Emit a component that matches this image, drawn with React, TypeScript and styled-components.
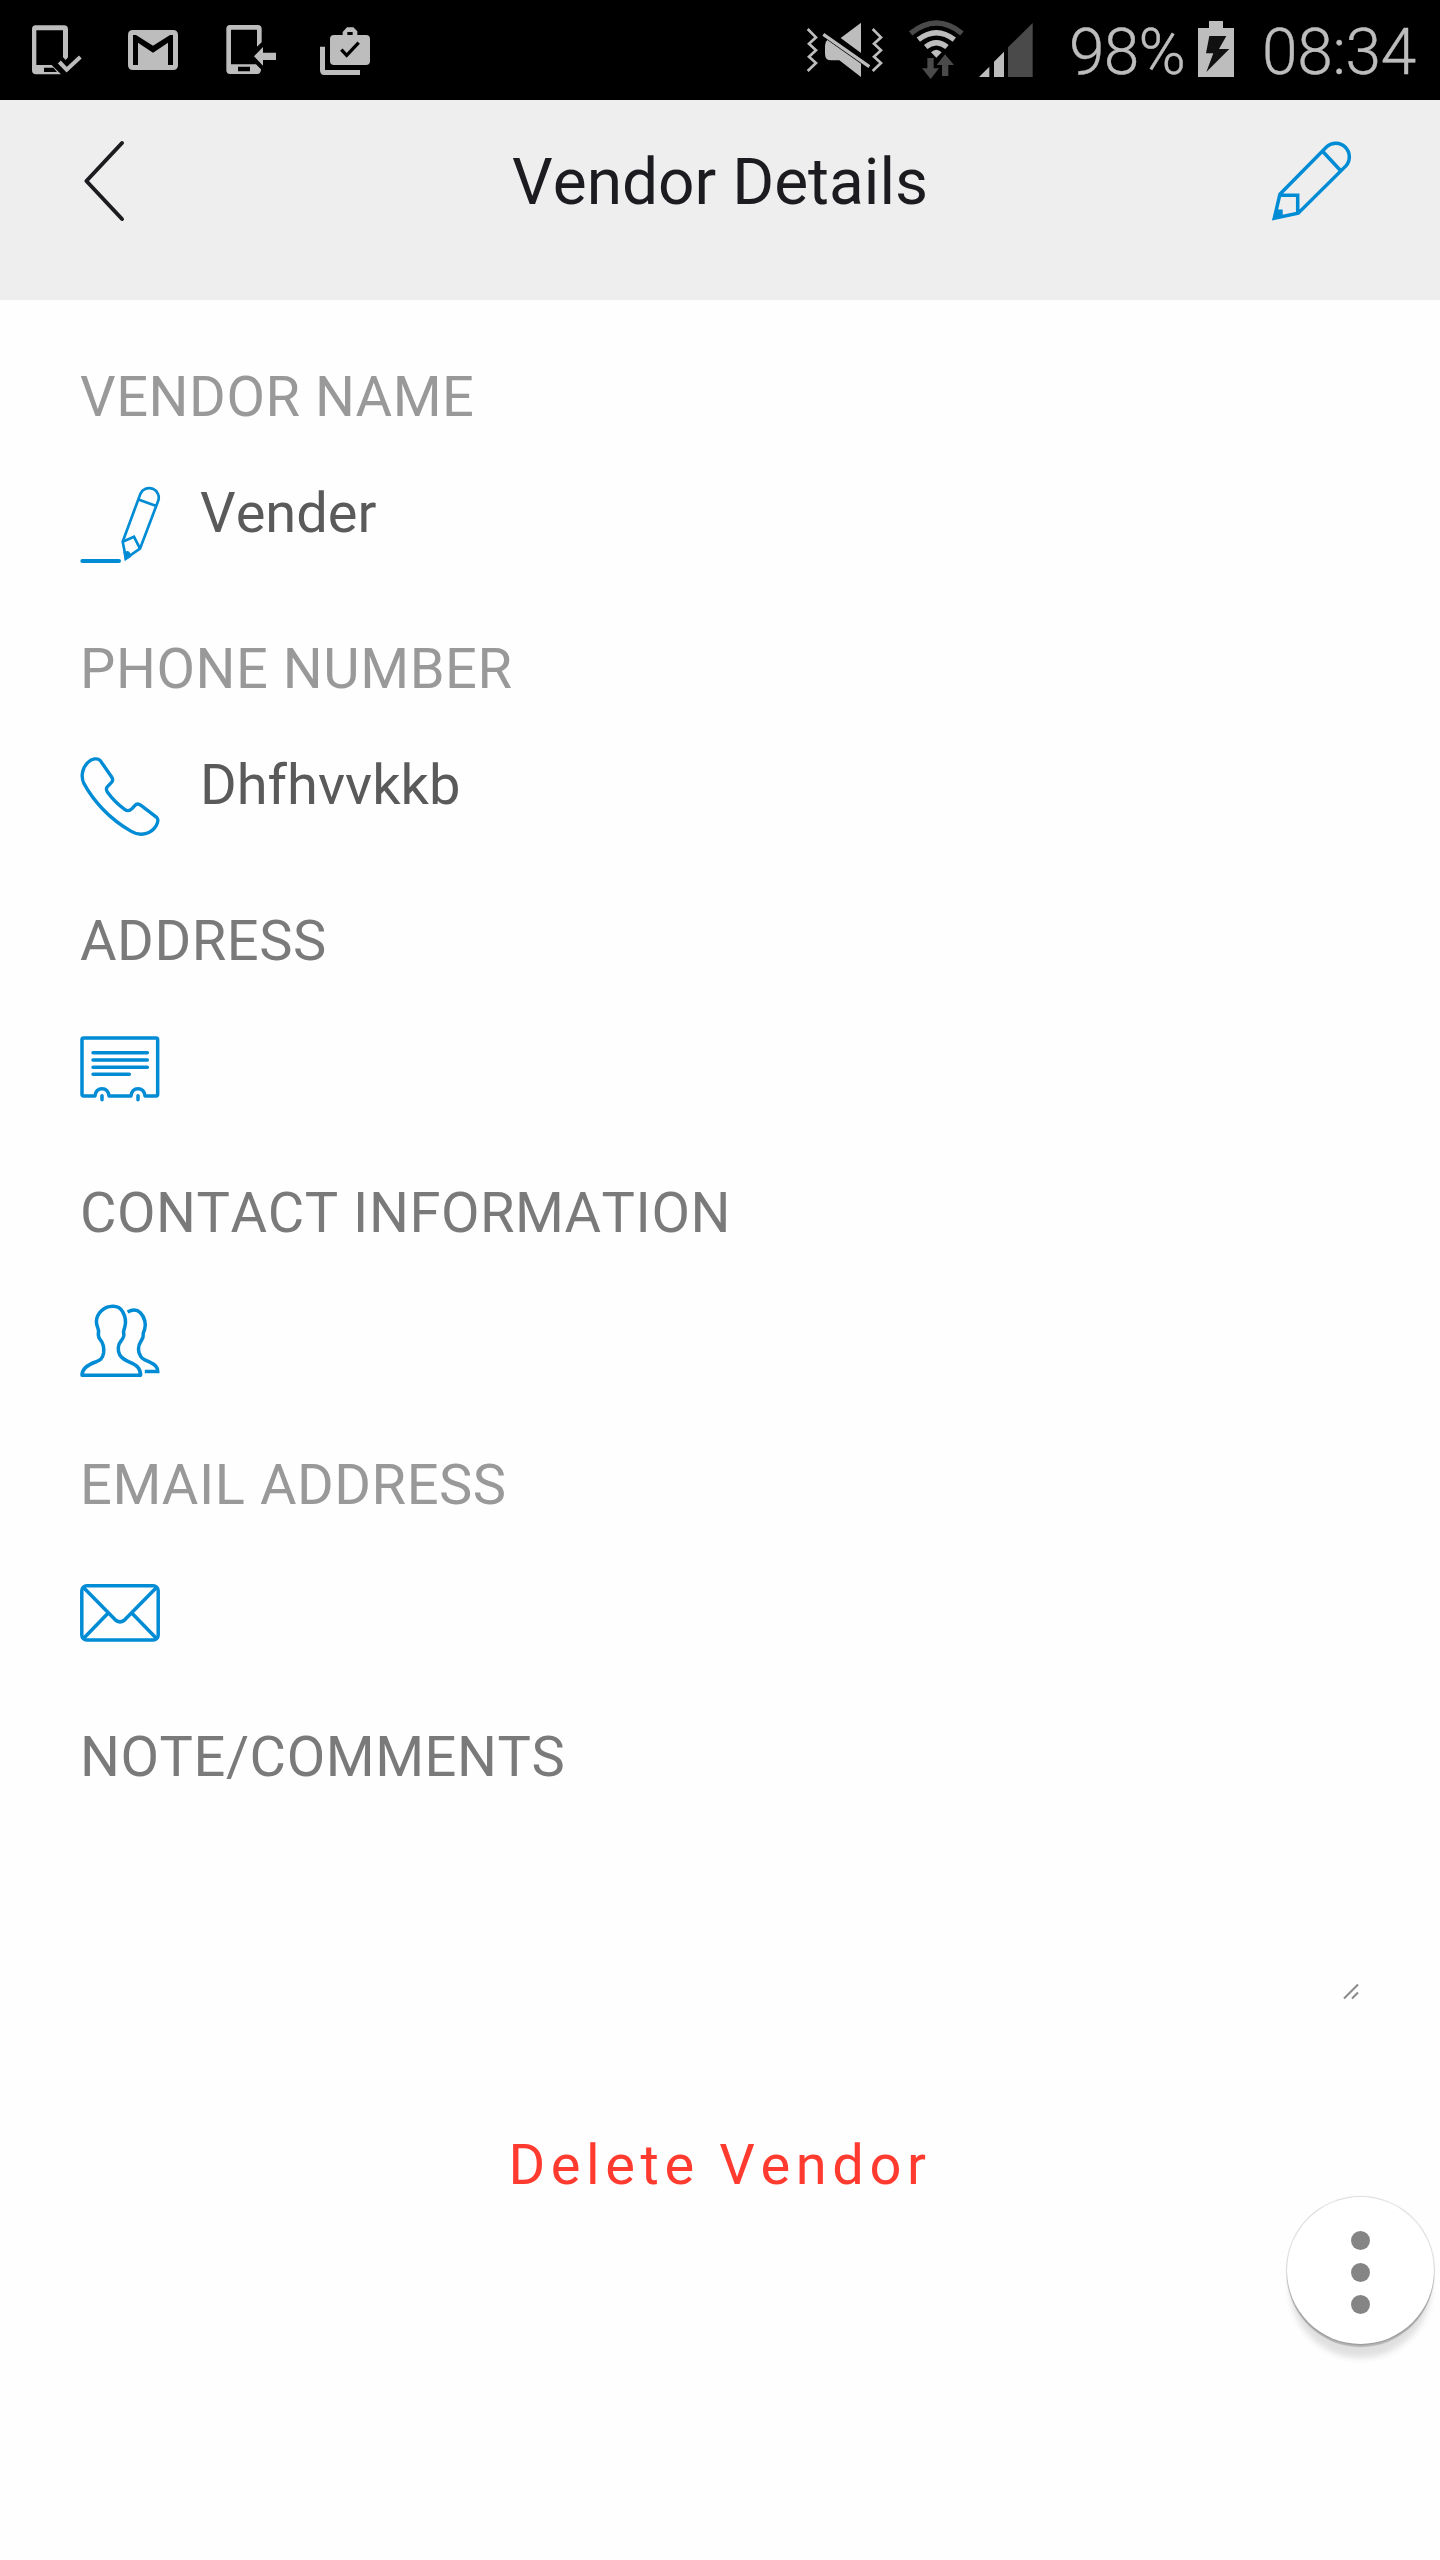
import React from "react";
import styled, { createGlobalStyle } from "styled-components";

const GlobalStyle = createGlobalStyle`
  html, body { margin: 0; padding: 0; background: #fefefe; }
  * { box-sizing: border-box; }
`;

const BLUE = "#008bd5";
const STATUS = "#bdbdbd";
const DIM = "#4a4a4a";

const Screen = styled.div`
  position: relative;
  display: flex;
  flex-direction: column;
  width: 1440px;
  height: 2560px;
  overflow: hidden;
  background: #fefefe;
  font-family: Roboto, "Noto Sans", sans-serif;
  font-size: 56px;
  font-kerning: none;
`;

const StatusBar = styled.div`
  display: flex;
  align-items: center;
  justify-content: space-between;
  height: 100px;
  padding: 0 25px 0 32px;
  background: #000;
`;

const StatusGroup = styled.div`
  display: flex;
  align-items: center;
`;

const StatusIcon = styled.svg<{ $w: number; $h: number; $after?: number }>`
  display: block;
  flex: none;
  width: ${(p) => p.$w}px;
  height: ${(p) => p.$h}px;
  margin-right: ${(p) => p.$after ?? 0}px;
`;

const StatusText = styled.span<{ $w: number; $spacing: number }>`
  width: ${(p) => p.$w}px;
  padding-top: 6px;
  font-size: 64px;
  font-weight: 300;
  line-height: 100px;
  letter-spacing: ${(p) => p.$spacing}px;
  white-space: nowrap;
  color: ${STATUS};
  -webkit-text-stroke: 0.4px ${STATUS};
`;

const Header = styled.header`
  display: flex;
  align-items: flex-start;
  justify-content: space-between;
  height: 200px;
  padding: 41px 88px 0 80px;
  background: #eeeeee;
`;

const Title = styled.h1`
  margin: 0;
  padding-left: 8px;
  font-size: 64px;
  font-weight: 400;
  line-height: 84px;
  color: #1c1c20;
`;

const IconButton = styled.button`
  display: block;
  width: 80px;
  height: 80px;
  padding: 0;
  border: 0;
  background: none;
`;

const Icon = styled.svg`
  display: block;
  flex: none;
  width: 80px;
  height: 80px;
  fill: none;
  stroke: ${BLUE};
  stroke-linejoin: round;
  overflow: visible;
`;

const Form = styled.main`
  display: flex;
  flex-direction: column;
  padding: 0 80px;
`;

const Field = styled.section`
  display: flex;
  flex-direction: column;
  min-height: 272px;
  padding-top: 61px;
`;

const Label = styled.div<{ $dark?: boolean }>`
  line-height: 72px;
  letter-spacing: 0.01em;
  white-space: nowrap;
  color: ${(p) => (p.$dark ? "#7a7a7a" : "#999999")};
`;

const FieldRow = styled.div`
  display: flex;
  gap: 40px;
  margin-top: 44px;

  svg { margin-top: 8px; }
`;

const Value = styled.div`
  line-height: 72px;
  color: #5a5a5a;
`;

const NoteArea = styled.div`
  display: flex;
  align-items: flex-end;
  justify-content: flex-end;
  height: 208px;
  padding-bottom: 1px;
`;

const Grip = styled.svg`
  display: block;
  width: 17px;
  height: 17px;
`;

const DeleteButton = styled.button`
  align-self: center;
  margin-top: 128px;
  padding: 0;
  border: 0;
  background: none;
  font: inherit;
  font-kerning: none;
  line-height: 72px;
  letter-spacing: 5.6px;
  color: #ff3b30;
`;

const Fab = styled.button`
  position: absolute;
  left: 1286.5px;
  top: 2197px;
  display: flex;
  flex-direction: column;
  align-items: center;
  justify-content: center;
  gap: 13.4px;
  width: 147px;
  height: 147px;
  padding: 4px 0 0;
  border: 0;
  border-radius: 50%;
  background: #fff;
  box-shadow: 0 0 1px 1px rgba(0, 0, 0, 0.14), 0 3px 1px 0 rgba(0, 0, 0, 0.2),
    0 17px 6px -3px rgba(0, 0, 0, 0.12);
`;

const Dot = styled.span`
  width: 19px;
  height: 19px;
  border-radius: 50%;
  background: #858585;
`;

const PhoneCheck = () => (
  <StatusIcon $w={50} $h={52} $after={46} viewBox="96 72 150 156">
    <path
      fill={STATUS}
      fillRule="evenodd"
      d="M107 76H192Q204 76 204 88V172L197 180L189 172V91H109V195H155L183 223H108Q96 223 96 211V88Q96 76 107 76ZM132 203V216H171L160 203Z"
    />
    <path fill="none" stroke={STATUS} strokeWidth="12" d="M178 186L200 209L241 171" />
  </StatusIcon>
);

const Gmail = () => (
  <StatusIcon $w={50} $h={52} $after={48} viewBox="384 72 150 156">
    <path
      fill={STATUS}
      fillRule="evenodd"
      d="M399 90H519Q534 90 534 105V195Q534 210 519 210H399Q384 210 384 195V105Q384 90 399 90ZM399 105V195H414V128L459 158L504 128V195H519V105H510L459 137L408 105Z"
    />
  </StatusIcon>
);

const PhoneArrow = () => (
  <StatusIcon $w={50} $h={52} $after={44} viewBox="678 72 150 156">
    <path
      fill={STATUS}
      fillRule="evenodd"
      d="M690 75H773Q785 75 785 87V127L771 140V89H693V193H768L783 208Q783 222 771 222H690Q679 222 679 210V87Q679 75 690 75ZM714 200V214H750V200Z"
    />
    <path fill={STATUS} d="M762 169L789 141V158H828V180H789V197Z" />
  </StatusIcon>
);

const WorkCheck = () => (
  <StatusIcon $w={50} $h={52} viewBox="960 72 150 156">
    <path
      fill={STATUS}
      fillRule="evenodd"
      d="M1028 105V96L1041 82H1060L1072 94V105H1098Q1110 105 1110 117V183Q1110 195 1098 195H1002Q990 195 990 183V117Q990 105 1002 105ZM1042 96V105H1058V96Z"
    />
    <path fill={STATUS} d="M960 140H975V210H1080V225H973Q960 225 960 211Z" />
    <path fill="none" stroke="#000" strokeWidth="10" d="M1024 149L1040 166L1076 128" />
  </StatusIcon>
);

const MuteIcon = () => (
  <StatusIcon $w={82} $h={60} $after={22} viewBox="72 60 246 180">
    <path
      fill="none"
      stroke={STATUS}
      strokeWidth="8"
      d="M83 87L108 112L87 131L108 151L87 170L108 189L83 213M278 87L303 112L282 131L303 151L282 170L303 189L278 213"
    />
    <path fill={STATUS} d="M243 68V159L182 114Z" />
    <path fill={STATUS} d="M142 120L243 191V231L178 181H153Q135 181 135 161V137Q135 125 142 120Z" />
    <path stroke={STATUS} strokeWidth="10" d="M130 103L268 200" />
  </StatusIcon>
);

const WifiIcon = () => (
  <StatusIcon $w={56} $h={60} $after={15} viewBox="384 60 168 180">
    <g fill="none" strokeWidth="16">
      <path stroke={DIM} d="M392 100Q469 38 546 100" />
      <path stroke={STATUS} d="M415 119Q469 77 523 119" />
      <path stroke={STATUS} d="M437 141Q469 115 501 141" />
    </g>
    <path fill={STATUS} d="M453 157Q469 142 485 157L469 173Z" />
    <path
      fill={DIM}
      d="M442 174H461V205H477L452 237L426 205H442ZM495 163L522 195H505V228H486V195H470Z"
    />
  </StatusIcon>
);

const SignalIcon = () => (
  <StatusIcon $w={55} $h={60} $after={35} viewBox="597 60 165 180">
    <path fill={STATUS} d="M597 231L628 200V231ZM642 185L672 155V231H642Z" />
    <path fill={DIM} d="M684 142L758 69V231H684Z" />
  </StatusIcon>
);

const BatteryIcon = () => (
  <StatusIcon $w={36} $h={60} $after={28} viewBox="474 60 108 180">
    <path fill={STATUS} d="M507 63H549V84H582V231H474V84H507Z" />
    <path fill="#111" d="M508 108H559L537 147H568L499 216L520 160H498Z" />
  </StatusIcon>
);

const BackIcon = () => (
  <Icon viewBox="0 0 80 80">
    <path stroke="#1c1c20" strokeWidth="4" strokeLinecap="round" d="M42 2L6.4 40L42 78" />
  </Icon>
);

const EditIcon = () => (
  <Icon viewBox="0 0 80 80">
    <path
      strokeWidth="3.5"
      strokeLinejoin="miter"
      d="M7.9 53.3L54.7 5.7A13.6 13.6 0 0 1 73.9 24.9L26.2 72.2L2.3 77.3ZM50.8 10.5L68.5 29.5M7.9 54.3H25.7V72"
    />
    <path stroke="none" fill={BLUE} d="M0.3 79.3L5 68.5H10.7V75Z" />
  </Icon>
);

const NameIcon = () => (
  <Icon viewBox="60 405 240 240">
    <path
      strokeWidth="8"
      strokeLinejoin="miter"
      d="M188 575L241 432A28 28 0 0 1 294 454L240 596L198 625ZM237 449L287 467M188 575L222 560L240 596"
    />
    <path stroke="none" fill={BLUE} d="M194 633L190 605L203 603L208 605L213 614L214 620Z" />
    <path strokeWidth="12" strokeLinecap="round" d="M67 633H177" />
  </Icon>
);

const PhoneIcon = () => (
  <Icon viewBox="60 381 240 240">
    <path
      strokeWidth="10"
      d="M121 392C113 383 96 385 83 398C66 415 62 441 72 461C98 509 146 566 214 604C242 621 274 612 289 586C295 575 296 568 290 562L243 526C235 520 230 520 225 526L216 536C208 544 202 544 194 538C173 523 155 504 142 486C138 479 138 473 144 468L154 458C160 452 159 447 155 441Z"
    />
  </Icon>
);

const AddressIcon = () => (
  <Icon viewBox="60 387 240 240">
    <path
      strokeWidth="10.5"
      d="M105 588H71Q66 588 66 583V419Q66 414 71 414H288Q293 414 293 419V583Q293 588 288 588H255C254 574 245 566 234 566S214 574 213 588H147C146 574 137 566 126 566S106 574 105 588Z"
    />
    <path
      strokeWidth="10.5"
      strokeLinecap="round"
      d="M99 458H262M99 480H262M99 502H262M99 523H208M126 587V599M234 587V599"
    />
  </Icon>
);

const ContactIcon = () => (
  <Icon viewBox="0 0 80 80">
    <path
      strokeWidth="3.5"
      d="M32.7 5.3C23.5 5.5 16.6 12.5 16.4 20.5C16.4 25 18.6 27.5 18.6 30.5C18 33 18.2 35.5 19.5 37.6C23.4 42 24.2 47 23.6 52C22.6 58 20 59 15.5 61C7 64 2 68 2 74.3H60.6C60.6 67 56.5 63.8 49 60.8C43.5 58.6 42 57.5 39.8 54C37.4 49.5 37.8 43.5 41 40C43.3 37 44.4 35.4 43.8 33C43 30 43.8 29.4 44.8 26C46.2 21 45.2 15 42.5 10.5C40.4 6.8 37.5 5.2 32.7 5.3Z"
    />
    <path
      strokeWidth="3.5"
      strokeLinejoin="miter"
      d="M47.6 11C52 8.6 57 8.4 60.4 11.8C64.8 16.4 66.4 23.5 64.6 28.4C63.6 31 63 31.8 63.2 33.8C63.6 36.4 62.3 38 60.8 40.5C57.7 45 57.8 51 60.5 55C62.4 58.5 66 59.4 69.8 61.2C75.5 63.7 78 66.4 77.8 70.5H64.8"
    />
  </Icon>
);

const MailIcon = () => (
  <Icon viewBox="0 0 80 80">
    <rect x="1.8" y="12.8" width="76.4" height="54.2" rx="5" strokeWidth="3.5" />
    <path
      strokeWidth="3.5"
      d="M3.5 14.5L35 46.6Q40 51.2 45 46.6L76.5 14.5M28.2 40L3.5 65.5M51.8 40L76.5 65.5"
    />
  </Icon>
);

type FieldSpec = {
  label: string;
  dark?: boolean;
  value?: string;
  Glyph: React.ComponentType;
};

const fields: FieldSpec[] = [
  { label: "VENDOR NAME", value: "Vender", Glyph: NameIcon },
  { label: "PHONE NUMBER", value: "Dhfhvvkkb", Glyph: PhoneIcon },
  { label: "ADDRESS", dark: true, Glyph: AddressIcon },
  { label: "CONTACT INFORMATION", dark: true, Glyph: ContactIcon },
  { label: "EMAIL ADDRESS", Glyph: MailIcon },
];

export default function App() {
  return (
    <Screen>
      <GlobalStyle />
      <StatusBar>
        <StatusGroup>
          <PhoneCheck />
          <Gmail />
          <PhoneArrow />
          <WorkCheck />
        </StatusGroup>
        <StatusGroup>
          <MuteIcon />
          <WifiIcon />
          <SignalIcon />
          <StatusText $w={129} $spacing={-0.8}>98%</StatusText>
          <BatteryIcon />
          <StatusText $w={153} $spacing={-0.3}>08:34</StatusText>
        </StatusGroup>
      </StatusBar>
      <Header>
        <IconButton aria-label="Back">
          <BackIcon />
        </IconButton>
        <Title>Vendor Details</Title>
        <IconButton aria-label="Edit">
          <EditIcon />
        </IconButton>
      </Header>
      <Form>
        {fields.map(({ label, dark, value, Glyph }) => (
          <Field key={label}>
            <Label $dark={dark}>{label}</Label>
            <FieldRow>
              <Glyph />
              {value && <Value>{value}</Value>}
            </FieldRow>
          </Field>
        ))}
        <Field>
          <Label $dark>NOTE/COMMENTS</Label>
          <NoteArea>
            <Grip viewBox="0 0 17 17">
              <path d="M1 15.5L15 1.5M9 15.5L15 9.5" stroke="#8c8c8c" strokeWidth="2.1" />
            </Grip>
          </NoteArea>
        </Field>
        <DeleteButton>Delete Vendor</DeleteButton>
      </Form>
      <Fab aria-label="More">
        <Dot />
        <Dot />
        <Dot />
      </Fab>
    </Screen>
  );
}
